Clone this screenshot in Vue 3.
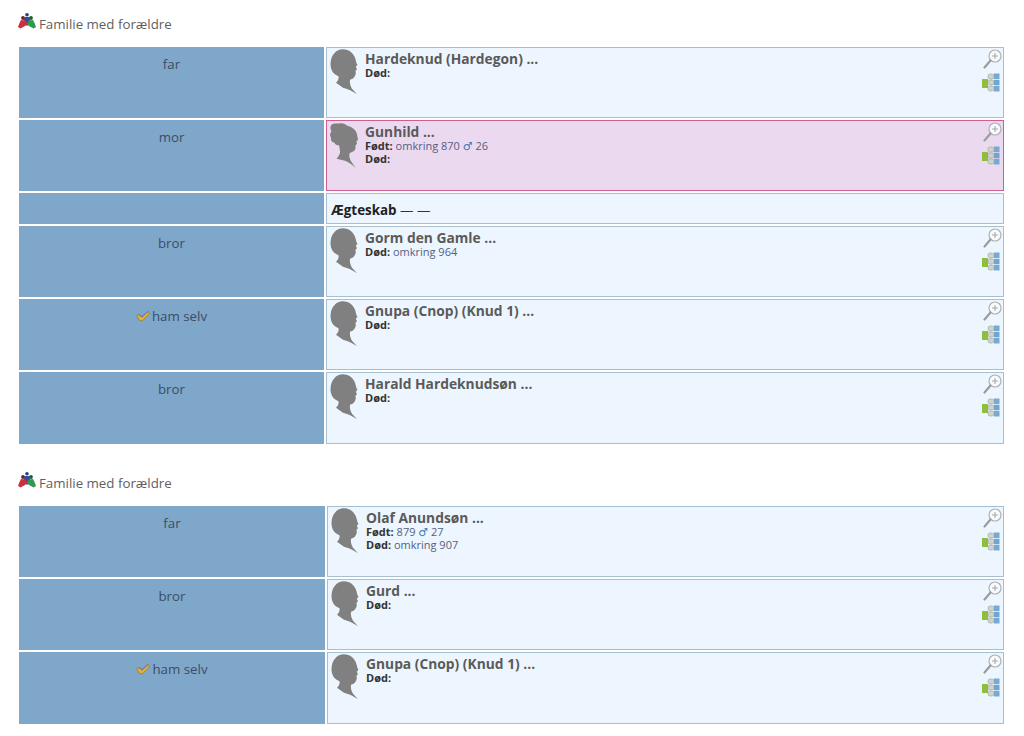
<script setup>
const headPath = 'M13 0C19 0 24 4 25.500 10L26.500 14L27.500 15.500L25.800 17.500L27 20L25.500 21.500L25.800 24.500C25 27 24 28.500 22.500 29.500L20 30.500C19.500 34 20.500 37 22 39.500L27 45C22 41.500 17 39.500 13 38.500L6 33.500C8 31.500 9 29.500 8.500 27C3 25 0.500 20 0.500 15C0.500 6 6 0 13 0Z'
const womanPath = 'M2 1C4 -0.500 7 0.500 10 0C14 -0.500 16 1.500 18 2.700C23 4 26 7 27 11L28 16.500L26.500 18L27 20.500L25.500 22L25.500 25C25 27 24 28 22.500 28.500L19.500 30C19 33 19.500 35 21 38L25.500 44.500C21 40.500 18 38.500 15 37.500L6.500 35.500C9 32.500 10.500 30 10 27.500L9 22C7 22 5 21.500 4.500 19.500C2 19 0.500 17 1 14.500C-0.500 12 0 9.500 1.500 8.500C0 6 0 3 2 1Z'

const tables = [
  {
    cls: 'first',
    rows: [
      { label: 'far', name: 'Hardeknud (Hardegon) ...', lines: [{ k: 'Død:', v: '' }] },
      { label: 'mor', name: 'Gunhild ...', female: true, lines: [{ k: 'Født:', v: 'omkring 870', age: '26' }, { k: 'Død:', v: '' }] },
      { label: '', marriage: true },
      { label: 'bror', name: 'Gorm den Gamle ...', lines: [{ k: 'Død:', v: 'omkring 964' }] },
      { label: 'ham selv', self: true, name: 'Gnupa (Cnop) (Knud 1) ...', lines: [{ k: 'Død:', v: '' }] },
      { label: 'bror', name: 'Harald Hardeknudsøn ...', lines: [{ k: 'Død:', v: '' }] },
    ],
  },
  {
    cls: 'second',
    rows: [
      { label: 'far', name: 'Olaf Anundsøn ...', lines: [{ k: 'Født:', v: '879', age: '27' }, { k: 'Død:', v: 'omkring 907' }] },
      { label: 'bror', name: 'Gurd ...', lines: [{ k: 'Død:', v: '' }] },
      { label: 'ham selv', self: true, name: 'Gnupa (Cnop) (Knud 1) ...', lines: [{ k: 'Død:', v: '' }] },
    ],
  },
]
</script>

<template>
  <div class="page">
    <section v-for="t in tables" :key="t.cls" class="family" :class="t.cls">
      <h2 class="title">
        <svg class="fam-icon" viewBox="0 0 18 16" width="18" height="16">
          <circle cx="9" cy="1.800" r="1.800" fill="#24408c" />
          <path d="M6.500 4L11.500 4L12.500 10L9 13L5.500 10Z" fill="#2c4f9f" />
          <circle cx="5" cy="5" r="1.900" fill="#6d2235" />
          <path d="M3 7L8 7.500L9.500 11L7 13L2.500 15.500L0 14L1.500 10Z" fill="#cf2f3c" />
          <circle cx="13" cy="5" r="1.900" fill="#17603a" />
          <path d="M10.500 7.500L15 7L16.500 10L18 14L15.500 15.500L11 13L9 11Z" fill="#2f9a4e" />
        </svg>
        <span>Familie med forældre</span>
      </h2>
      <div class="grid">
        <div v-for="(r, i) in t.rows" :key="i" class="row" :class="{ short: r.marriage }">
          <div class="label">
            <svg v-if="r.self" class="check" viewBox="0 0 14 12" width="14" height="12">
              <path d="M0.800 5.500L3 4.200L6 6.800L12 1L13.300 4L6.200 11L3 10Z" fill="#e3b52e" stroke="#8a7a30" stroke-width=".7" />
              <path d="M3 4.500L6 7L11.500 1.800" fill="none" stroke="#7d6fc8" stroke-width="1.100" />
            </svg>
            <span>{{ r.label }}</span>
          </div>
          <div v-if="r.marriage" class="card marriage"><b>Ægteskab</b> — —</div>
          <div v-else class="card" :class="{ female: r.female }">
            <svg class="head" :class="{ woman: r.female }" viewBox="0 0 28 45.500" width="28" height="46">
              <path :d="r.female ? womanPath : headPath" fill="#808080" />
            </svg>
            <div class="info">
              <div class="name">{{ r.name }}</div>
              <div v-for="l in r.lines" :key="l.k" class="line">
                <b>{{ l.k }}</b> {{ l.v }}
                <template v-if="l.age"><span class="mars">♂</span> {{ l.age }}</template>
              </div>
            </div>
            <div class="tools">
              <svg viewBox="0 0 20 20" width="20" height="20">
                <circle cx="13" cy="7" r="6" fill="#f8fbfd" stroke="#b0b0b0" stroke-width="1.200" />
                <path d="M13 4V10M10 7H16" stroke="#a8a8a8" stroke-width="1.100" />
                <path d="M8.500 11.500L2.500 18.500" stroke="#9c9c9c" stroke-width="2.200" stroke-linecap="round" />
              </svg>
              <svg viewBox="0 0 18 19" width="18" height="19">
                <rect x="0" y="6" width="6" height="9" fill="#8fbe3e" />
                <rect x="12" y="0.500" width="5.500" height="5.500" fill="#76a9d4" />
                <rect x="12" y="6.800" width="5.500" height="5.500" fill="#6fa5d2" />
                <rect x="12" y="13" width="5.500" height="5.500" fill="#76a9d4" />
                <rect x="6" y="1" width="6" height="5" rx="2" fill="#cfd3cc" stroke="#9ca69b" stroke-width=".6" />
                <rect x="6" y="7" width="6" height="5" rx="2" fill="#cfd3cc" stroke="#9ca69b" stroke-width=".6" />
                <rect x="6" y="13" width="6" height="5" rx="2" fill="#cfd3cc" stroke="#9ca69b" stroke-width=".6" />
              </svg>
            </div>
          </div>
        </div>
      </div>
    </section>
  </div>
</template>

<style>
html, body { margin: 0; background: #fff; }
</style>

<style scoped>
.page {
  width: 1024px;
  height: 736px;
  overflow: hidden;
  box-sizing: border-box;
  padding-top: 14px;
  font-family: "Open Sans", "Noto Sans", sans-serif;
  color: #555;
}
.family { padding-left: 19px; width: 1004px; box-sizing: border-box; }
.family.second { margin-top: 29px; }
.title {
  display: flex;
  align-items: flex-start;
  gap: 3px;
  margin: 0 0 13px -1px;
  height: 20px;
  font-size: 13.3px;
  line-height: 20px;
  font-weight: 400;
  color: #5f5f5f;
}
.fam-icon { margin-top: -1px; }
.grid { display: flex; flex-direction: column; gap: 2px; }
.row { display: grid; grid-template-columns: 305px 1fr; column-gap: 2px; height: 71px; }
.row:last-child { height: 72px; }
.second .row { grid-template-columns: 306px 1fr; }
.row.short { height: 31px; }
.label {
  background: #7fa7ca;
  color: #3c4d63;
  font-size: 13.3px;
  line-height: 18px;
  padding-top: 8px;
  text-align: center;
  box-sizing: border-box;
}
.check { margin-right: 2px; vertical-align: -1px; }
.card {
  position: relative;
  display: flex;
  gap: 7px;
  background: #edf6fe;
  border: 1px solid #a6c0d2;
  box-sizing: border-box;
  padding: 1px 3px;
}
.card.female { background: #ebd9f0; border-color: #cf5f93; }
.card.marriage {
  display: block;
  color: #333;
  font-size: 13.4px;
  line-height: 20px;
  padding: 6px 4px 3px;
}
.card.marriage b { color: #222; }
.head { flex: none; }
.head.woman { margin-top: 1px; }
.info { padding-top: 2px; }
.name { font-size: 13.8px; font-weight: 700; line-height: 15px; color: #5a5a5a; }
.line { font-size: 11px; line-height: 13px; color: #55607e; }
.line b { color: #333; }
.mars { color: #3b78b5; font-family: "DejaVu Sans", sans-serif; line-height: 0; }
.tools {
  position: absolute;
  right: 1px;
  top: 1px;
  display: flex;
  flex-direction: column;
  align-items: flex-end;
  gap: 4px;
}
.tools svg:last-child { margin-right: 2px; }
</style>
